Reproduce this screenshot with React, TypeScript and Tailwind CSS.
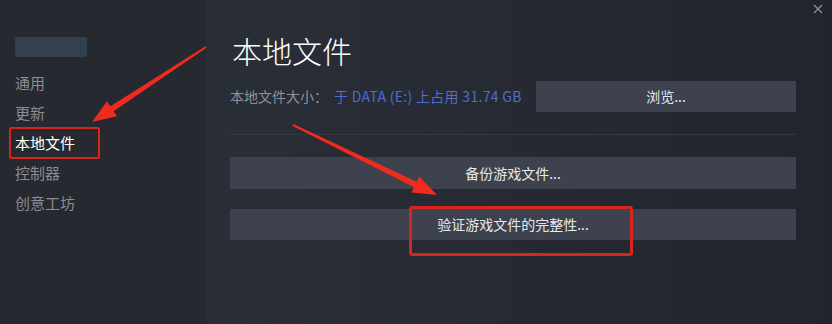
const navItems = ["通用", "更新", "本地文件", "控制器", "创意工坊"];

function Arrows() {
  return (
    <svg
      className="pointer-events-none absolute inset-0"
      width="832"
      height="324"
      viewBox="0 0 832 324"
    >
      <polygon
        fill="#ef2a1f"
        points="205.5,46.2 110.4,106.3 107,101.3 92,122 117,116.3 113.6,111.3 206.5,47.8"
      />
      <polygon
        fill="#ef2a1f"
        points="293.4,124.1 416.7,181.8 419.3,176.4 437,195 411.5,192.6 414.1,187.2 292.6,125.9"
      />
    </svg>
  );
}

export default function App() {
  return (
    <div className="relative flex h-[324px] w-[832px] overflow-hidden font-['Noto_Sans_CJK_SC','Liberation_Sans',sans-serif]">
      {/* sidebar */}
      <aside className="w-[207px] shrink-0 bg-[#26292f] pl-[9px] pt-[37px]">
        <div className="ml-[6px] h-[20px] w-[72px] rounded-[2px] bg-[#334050] blur-[0.5px]" />

        <nav className="mt-[11px] flex flex-col">
          {navItems.map((item) => (
            <div
              key={item}
              className={
                item === "本地文件"
                  ? "-my-px flex h-[32px] w-[91px] items-center rounded-[2px] border-2 border-[#d8261f] px-[4px] text-[15px] text-white"
                  : "flex h-[30px] items-center border-2 border-transparent px-[4px] text-[15px] text-[#8a8d93]"
              }
            >
              {item}
            </div>
          ))}
        </nav>
      </aside>

      {/* main */}
      <main className="flex-1 bg-gradient-to-r from-[#2a2e37] to-[#22252c] pl-[23px] pr-[36px] pt-[31px]">
        <h1 className="pl-[2px] text-[30px] font-light leading-[38px] text-white">
          本地文件
        </h1>

        <div className="mt-[12px] flex items-center justify-between">
          <p className="text-[14px] text-[#8e9197]">
            本地文件大小：
            <span className="ml-[6px] tracking-[0.3px] text-[#4d6fcd]">
              于 DATA (E:) 上占用 31.74 GB
            </span>
          </p>

          <button className="h-[31px] w-[260px] bg-[#3e424e] text-[14px] text-[#e8e8e8]">
            浏览...
          </button>
        </div>

        <div className="mt-[22px] h-px bg-[#353943]" />

        <div className="mt-[22px] flex flex-col gap-[20px]">
          <button className="h-[32px] w-full bg-[#3e424e] text-[14px] text-[#e8e8e8]">
            备份游戏文件...
          </button>

          <button className="h-[31px] w-full bg-[#3e424e] text-[14px] text-[#e8e8e8]">
            验证游戏文件的完整性...
          </button>
        </div>
      </main>

      {/* close */}
      <svg
        className="absolute right-[9px] top-[4px]"
        width="10"
        height="10"
        viewBox="0 0 10 10"
      >
        <path d="M1 1 L9 9 M9 1 L1 9" stroke="#8b8e94" strokeWidth="1.3" />
      </svg>

      {/* annotation box round the verify button */}
      <div className="pointer-events-none absolute left-[409px] top-[206px] h-[50px] w-[224px] rounded-[3px] border-[3px] border-[#d8261f]" />

      <Arrows />
    </div>
  );
}
